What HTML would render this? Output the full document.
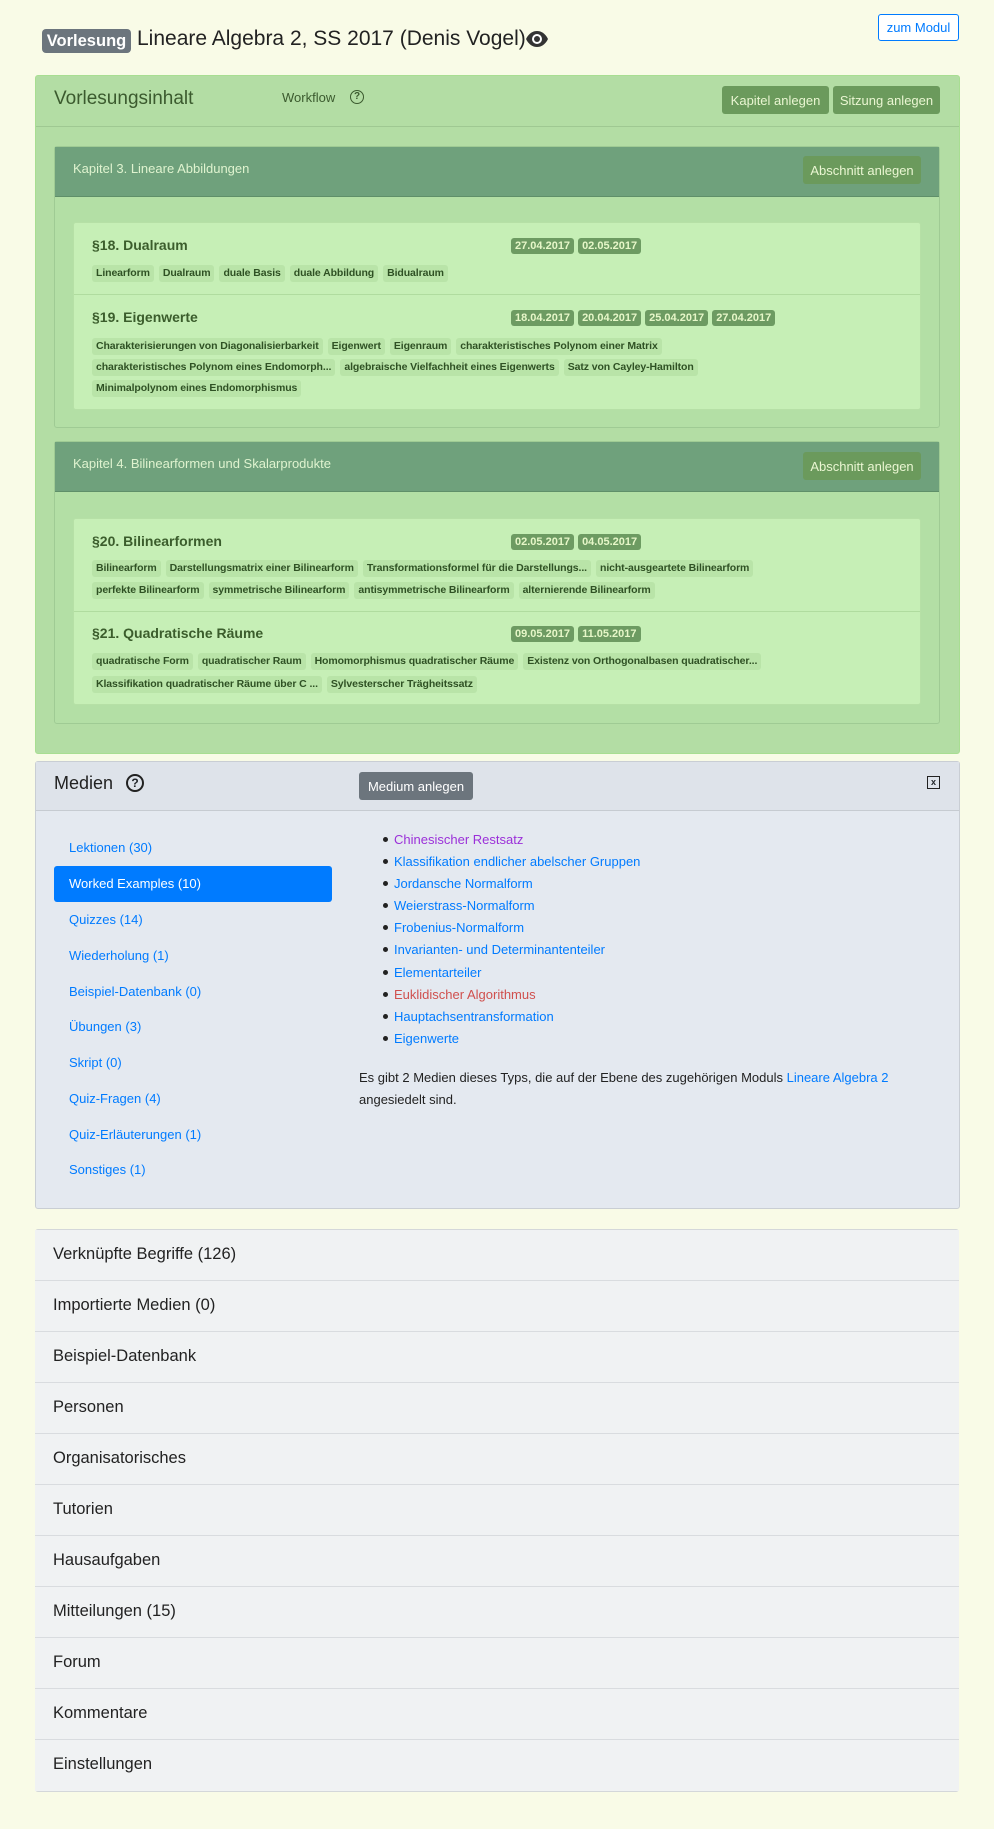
<!DOCTYPE html>
<html><head><meta charset="utf-8"><style>
*{box-sizing:border-box;margin:0;padding:0}
body{width:994px;height:1829px;background:#f9fbe7;font-family:"Liberation Sans",sans-serif;position:relative;overflow:hidden;color:#212529}
.a{position:absolute}
.badge{background:#6c757d;color:#fff;font-weight:bold;border-radius:4px;font-size:16px;display:flex;align-items:center;justify-content:center}
.btn{position:absolute;display:flex;align-items:center;justify-content:center;border-radius:3px;font-size:13px}
.gbtn{background:#6b9a5c;color:#eaf6d2}
.sec{position:absolute;left:73px;width:848px;background:#c6efb6;border:1px solid #b6e0a6;border-radius:3px}
.st{position:absolute;left:18px;font-size:14px;font-weight:bold;color:#3b5d2c}
.row{position:absolute;left:18px;display:flex;gap:5px}
.tag{background:#b9e4a8;color:#2f5124;font-size:10.5px;font-weight:bold;padding:0 4px;height:17px;line-height:17px;border-radius:3px;white-space:nowrap;letter-spacing:-0.1px}
.dates{position:absolute;left:437px;display:flex;gap:4px}
.date{background:#6d9b62;color:#e6f7c8;font-size:11px;font-weight:bold;padding:0 4px;height:16px;line-height:16px;border-radius:3px}
.chap{position:absolute;left:54px;width:886px;border:1px solid #9fcb94;border-radius:3px;background:#b3dfa5}
.chh{height:50px;background:#6fa17c;border-bottom:1px solid #5f8f69;position:relative}
.chh span{position:absolute;left:18px;top:14px;color:#dff3cf;font-size:13px}
.ml{position:absolute;left:69px;color:#007bff;font-size:13px}
.rl{position:absolute;left:394px;font-size:13px;color:#007bff}
.rl:before{content:"";position:absolute;left:-11px;top:5px;width:5px;height:5px;border-radius:50%;background:#222}
.acc{position:absolute;left:35px;width:924px;height:51px;border-bottom:1px solid #d9dcdf;background:#f0f2f3;font-size:16.5px;padding:15px 0 0 18px;color:#222}
</style></head><body>
<div class="a badge" style="left:42px;top:29px;width:89px;height:24px;font-size:16.5px">Vorlesung</div>
<div class="a" style="left:137px;top:27px;font-size:21px;color:#222">Lineare Algebra 2, SS 2017 (Denis Vogel)</div>
<svg class="a" style="left:525px;top:30px" width="24" height="18" viewBox="0 0 24 18"><path d="M1 9C4 3 8 1 12 1s8 2 11 8c-3 6-7 8-11 8S4 15 1 9z" fill="#333"/><circle cx="12" cy="9" r="5" fill="#fff"/><circle cx="12" cy="9" r="3" fill="#333"/></svg>
<div class="btn" style="left:878px;top:14px;width:81px;height:27px;border:1px solid #007bff;color:#007bff;background:#fff">zum Modul</div>

<div class="a" style="left:35px;top:75px;width:925px;height:679px;background:#b3dda4;border:1px solid #a8de92;border-radius:3px"></div>
<div class="a" style="left:36px;top:126px;width:923px;height:1px;background:#9fc892"></div>
<div class="a" style="left:54px;top:88px;font-size:19px;color:#3b5a2e">Vorlesungsinhalt</div>
<div class="a" style="left:282px;top:90px;font-size:13px;color:#3b5a2e">Workflow</div>
<div class="a" style="left:350px;top:90px;width:14px;height:14px;border:1.6px solid #3b5a2e;border-radius:50%;font-size:10px;font-weight:bold;color:#3b5a2e;text-align:center;line-height:11px">?</div>
<div class="btn gbtn" style="left:722px;top:86px;width:107px;height:28px">Kapitel anlegen</div>
<div class="btn gbtn" style="left:833px;top:86px;width:107px;height:28px">Sitzung anlegen</div>

<div class="chap" style="top:146px;height:282px"><div class="chh"><span>Kapitel 3. Lineare Abbildungen</span></div></div>
<div class="btn gbtn" style="left:803px;top:156px;width:118px;height:28px">Abschnitt anlegen</div>
<div class="sec" style="top:222px;height:188px">
 <div class="st" style="top:14px">§18. Dualraum</div>
 <div class="dates" style="top:15px"><span class="date">27.04.2017</span><span class="date">02.05.2017</span></div>
 <div class="row" style="top:42px"><span class="tag">Linearform</span><span class="tag">Dualraum</span><span class="tag">duale Basis</span><span class="tag">duale Abbildung</span><span class="tag">Bidualraum</span></div>
 <div class="a" style="left:0;top:71px;width:846px;height:1px;background:#b0dc9f"></div>
 <div class="st" style="top:86px">§19. Eigenwerte</div>
 <div class="dates" style="top:87px"><span class="date">18.04.2017</span><span class="date">20.04.2017</span><span class="date">25.04.2017</span><span class="date">27.04.2017</span></div>
 <div class="row" style="top:115px"><span class="tag">Charakterisierungen von Diagonalisierbarkeit</span><span class="tag">Eigenwert</span><span class="tag">Eigenraum</span><span class="tag">charakteristisches Polynom einer Matrix</span></div>
 <div class="row" style="top:136px"><span class="tag">charakteristisches Polynom eines Endomorph...</span><span class="tag">algebraische Vielfachheit eines Eigenwerts</span><span class="tag">Satz von Cayley-Hamilton</span></div>
 <div class="row" style="top:157px"><span class="tag">Minimalpolynom eines Endomorphismus</span></div>
</div>

<div class="chap" style="top:441px;height:283px"><div class="chh"><span>Kapitel 4. Bilinearformen und Skalarprodukte</span></div></div>
<div class="btn gbtn" style="left:803px;top:452px;width:118px;height:28px">Abschnitt anlegen</div>
<div class="sec" style="top:518px;height:187px">
 <div class="st" style="top:14px">§20. Bilinearformen</div>
 <div class="dates" style="top:15px"><span class="date">02.05.2017</span><span class="date">04.05.2017</span></div>
 <div class="row" style="top:41px"><span class="tag">Bilinearform</span><span class="tag">Darstellungsmatrix einer Bilinearform</span><span class="tag">Transformationsformel für die Darstellungs...</span><span class="tag">nicht-ausgeartete Bilinearform</span></div>
 <div class="row" style="top:63px"><span class="tag">perfekte Bilinearform</span><span class="tag">symmetrische Bilinearform</span><span class="tag">antisymmetrische Bilinearform</span><span class="tag">alternierende Bilinearform</span></div>
 <div class="a" style="left:0;top:92px;width:846px;height:1px;background:#b0dc9f"></div>
 <div class="st" style="top:106px">§21. Quadratische Räume</div>
 <div class="dates" style="top:107px"><span class="date">09.05.2017</span><span class="date">11.05.2017</span></div>
 <div class="row" style="top:134px"><span class="tag">quadratische Form</span><span class="tag">quadratischer Raum</span><span class="tag">Homomorphismus quadratischer Räume</span><span class="tag">Existenz von Orthogonalbasen quadratischer...</span></div>
 <div class="row" style="top:157px"><span class="tag">Klassifikation quadratischer Räume über C ...</span><span class="tag">Sylvesterscher Trägheitssatz</span></div>
</div>

<div class="a" style="left:35px;top:761px;width:925px;height:448px;background:#e4e9f0;border:1px solid #c9ced4;border-radius:3px"></div>
<div class="a" style="left:36px;top:762px;width:923px;height:49px;background:#dee3ea;border-bottom:1px solid #c6cbd1"></div>
<div class="a" style="left:54px;top:773px;font-size:18px;color:#222">Medien</div>
<div class="a" style="left:126px;top:774px;width:18px;height:18px;border:2px solid #222;border-radius:50%;font-size:12px;font-weight:bold;text-align:center;line-height:14px">?</div>
<div class="btn" style="left:359px;top:772px;width:114px;height:28px;background:#6c757d;color:#fff">Medium anlegen</div>
<div class="a" style="left:927px;top:776px;width:13px;height:13px;border:1.5px solid #222;font-size:9px;font-weight:bold;text-align:center;line-height:10px">x</div>
<div class="ml" style="top:840px">Lektionen (30)</div>
<div class="a" style="left:54px;top:866px;width:278px;height:36px;background:#007bff;border-radius:3px"></div>
<div class="ml" style="top:876px;color:#fff">Worked Examples (10)</div>
<div class="ml" style="top:912px">Quizzes (14)</div>
<div class="ml" style="top:948px">Wiederholung (1)</div>
<div class="ml" style="top:984px">Beispiel-Datenbank (0)</div>
<div class="ml" style="top:1019px">Übungen (3)</div>
<div class="ml" style="top:1055px">Skript (0)</div>
<div class="ml" style="top:1091px">Quiz-Fragen (4)</div>
<div class="ml" style="top:1127px">Quiz-Erläuterungen (1)</div>
<div class="ml" style="top:1162px">Sonstiges (1)</div>
<div class="rl" style="top:832px;color:#9b30d9">Chinesischer Restsatz</div>
<div class="rl" style="top:854px">Klassifikation endlicher abelscher Gruppen</div>
<div class="rl" style="top:876px">Jordansche Normalform</div>
<div class="rl" style="top:898px">Weierstrass-Normalform</div>
<div class="rl" style="top:920px">Frobenius-Normalform</div>
<div class="rl" style="top:942px">Invarianten- und Determinantenteiler</div>
<div class="rl" style="top:965px">Elementarteiler</div>
<div class="rl" style="top:987px;color:#d0504e">Euklidischer Algorithmus</div>
<div class="rl" style="top:1009px">Hauptachsentransformation</div>
<div class="rl" style="top:1031px">Eigenwerte</div>
<div class="a" style="left:359px;top:1067px;width:570px;font-size:13px;line-height:22px;color:#222">Es gibt 2 Medien dieses Typs, die auf der Ebene des zugehörigen Moduls <span style="color:#007bff">Lineare Algebra 2</span> angesiedelt sind.</div>

<div class="a" style="left:35px;top:1229px;width:924px;height:563px;border:1px solid #d4d7da;border-radius:3px;background:#f0f2f3"></div>
<div class="acc" style="top:1230px">Verknüpfte Begriffe (126)</div>
<div class="acc" style="top:1281px">Importierte Medien (0)</div>
<div class="acc" style="top:1332px">Beispiel-Datenbank</div>
<div class="acc" style="top:1383px">Personen</div>
<div class="acc" style="top:1434px">Organisatorisches</div>
<div class="acc" style="top:1485px">Tutorien</div>
<div class="acc" style="top:1536px">Hausaufgaben</div>
<div class="acc" style="top:1587px">Mitteilungen (15)</div>
<div class="acc" style="top:1638px">Forum</div>
<div class="acc" style="top:1689px">Kommentare</div>
<div class="acc" style="top:1740px;border-bottom:none">Einstellungen</div>
</body></html>
